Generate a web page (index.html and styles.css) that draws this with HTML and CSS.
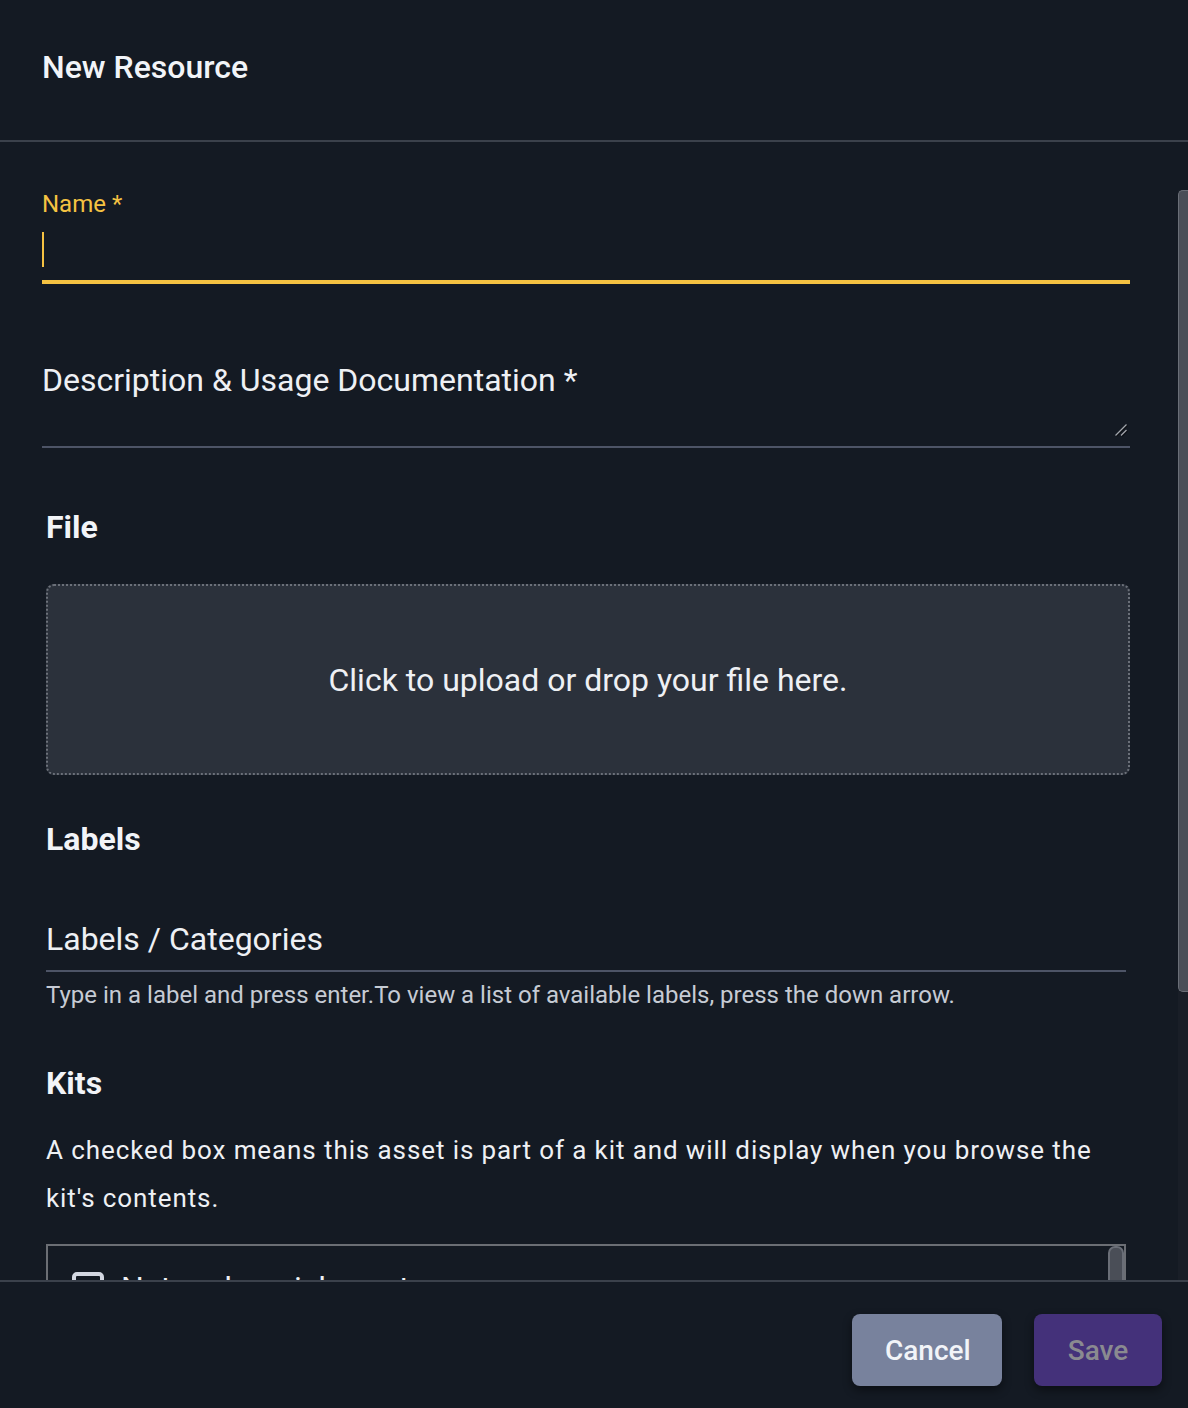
FILE: index.html
```html
<!DOCTYPE html>
<html lang="en">
<head>
<meta charset="utf-8">
<title>New Resource</title>
<link rel="stylesheet" href="styles.css">
</head>
<body>
<div class="dialog">
  <header class="dialog-header">
    <h1 class="dialog-title">New Resource</h1>
  </header>
  <div class="dialog-body">
    <form class="form">
      <div class="field-name">
        <label class="name-label">Name *</label>
        <div class="name-input"><span class="caret"></span></div>
      </div>
      <div class="field-desc">
        <label class="desc-label">Description &amp; Usage Documentation *</label>
        <div class="desc-input">
          <svg class="resize-handle" width="14" height="14" viewBox="0 0 14 14">
            <path d="M13 2 L2 13" stroke="#0b0e13" stroke-width="2.4"/>
            <path d="M13 7.5 L7.5 13" stroke="#0b0e13" stroke-width="2.4"/>
            <path d="M12.5 1.5 L1.5 12.5" stroke="#a3a7ae" stroke-width="1.3"/>
            <path d="M12.5 7 L7 12.5" stroke="#a3a7ae" stroke-width="1.3"/>
          </svg>
        </div>
      </div>

      <section class="section">
        <h2 class="section-title title-file">File</h2>
        <div class="dropzone">Click to upload or drop your file here.</div>
      </section>

      <section class="section">
        <h2 class="section-title title-labels">Labels</h2>
        <div class="labels-field">
          <span class="labels-label">Labels / Categories</span>
        </div>
        <p class="helper">Type in a label and press enter.To view a list of available labels, press the down arrow.</p>
      </section>

      <section class="section">
        <h2 class="section-title title-kits">Kits</h2>
        <p class="kits-text">A checked box means this asset is part of a kit and will display when you browse the kit's contents.</p>
        <div class="kits-box">
          <div class="kit-row">
            <span class="checkbox"></span>
            <span class="kit-name">Network enrichment</span>
          </div>
          <div class="kit-row">
            <span class="checkbox"></span>
            <span class="kit-name">Threat intelligence</span>
          </div>
          <div class="kits-thumb"></div>
        </div>
      </section>
    </form>
    <div class="scrollbar"><div class="scroll-thumb"></div></div>
  </div>
  <footer class="dialog-footer">
    <button class="btn btn-cancel" type="button">Cancel</button>
    <button class="btn btn-save" type="button" disabled>Save</button>
  </footer>
</div>
</body>
</html>
```

FILE: styles.css
```css
* { box-sizing: border-box; }

html, body {
  margin: 0;
  padding: 0;
  background: #141a23;
}

body {
  font-family: Roboto, "Liberation Sans", sans-serif;
  color: #eef0f4;
}

.dialog {
  width: 1188px;
  height: 1408px;
  display: flex;
  flex-direction: column;
  background: #141a23;
  overflow: hidden;
}

.dialog-header {
  height: 142px;
  flex: none;
  padding: 48px 0 0 42px;
  border-bottom: 2px solid #3b414b;
}

.dialog-title {
  margin: 0;
  font-size: 32px;
  line-height: 38px;
  font-weight: 500;
  color: #f2f4f8;
}

.dialog-body {
  position: relative;
  height: 1138px;
  flex: none;
  overflow: hidden;
}

.form {
  padding: 50px 58px 0 42px;
  margin: 0;
}

/* Name field */
.name-label {
  display: block;
  font-size: 24px;
  line-height: 24px;
  color: #f5c242;
}

.name-input {
  height: 68px;
  padding-top: 16px;
  border-bottom: 4px solid #f5c242;
}

.caret {
  display: block;
  width: 2px;
  height: 35px;
  background: #f5c242;
}

/* Description */
.field-desc {
  margin-top: 80px;
}

.desc-label {
  display: block;
  font-size: 32px;
  line-height: 32px;
  color: #eef0f4;
}

.desc-input {
  position: relative;
  height: 52px;
  border-bottom: 2px solid #4d5466;
}

.resize-handle {
  position: absolute;
  right: 2px;
  bottom: 9px;
}

/* Sections */
.section {
  margin-left: 4px;
}

.section-title {
  margin: 0;
  font-size: 32px;
  line-height: 32px;
  font-weight: 700;
  color: #f2f4f8;
}

.title-file { margin-top: 63px; }
.title-labels { margin-top: 48px; }
.title-kits { margin-top: 60px; }

.dropzone {
  margin-top: 41px;
  height: 191px;
  background: #2b313b;
  border: 2px dotted #6b7079;
  border-radius: 8px;
  display: flex;
  align-items: center;
  justify-content: center;
  font-size: 32px;
  color: #eef0f4;
}

.labels-field {
  margin-top: 68px;
  margin-right: 4px;
  height: 49px;
  border-bottom: 2px solid #4d5466;
}

.labels-label {
  display: block;
  font-size: 32px;
  line-height: 32px;
  color: #eef0f4;
}

.helper {
  margin: 11px 0 0;
  font-size: 24px;
  line-height: 24px;
  color: #c6cbd4;
}

.kits-text {
  margin: 27px 4px 0 0;
  font-size: 26px;
  line-height: 48px;
  letter-spacing: 0.9px;
  color: #eef0f4;
}

.kits-box {
  position: relative;
  margin-top: 22px;
  margin-right: 4px;
  height: 220px;
  border: 2px solid #6b6e74;
  padding: 26px 0 0 24px;
}

.kit-row {
  display: flex;
  align-items: center;
  gap: 17px;
  height: 32px;
  margin-bottom: 24px;
}

.checkbox {
  width: 32px;
  height: 32px;
  border: 4px solid #d3d7e1;
  border-radius: 5px;
  flex: none;
}

.kit-name {
  font-size: 32px;
  line-height: 32px;
  color: #eef0f4;
}

.kits-thumb {
  position: absolute;
  top: 0;
  right: 0;
  width: 16px;
  height: 120px;
  background: #4a4e57;
  border: 2px solid #6a6e77;
  border-radius: 7px 7px 0 0;
}

/* Overlay scrollbar */
.scrollbar {
  position: absolute;
  top: 48px;
  right: 0;
  bottom: 0;
  width: 10px;
  background: #191e27;
}

.scroll-thumb {
  height: 802px;
  background: #4a4e57;
  border: 1px solid #6a6e77;
  border-right: none;
  border-radius: 5px 0 0 5px;
}

/* Footer */
.dialog-footer {
  flex: 1;
  border-top: 2px solid #3b414b;
  display: flex;
  justify-content: flex-end;
  align-items: flex-start;
  gap: 32px;
  padding: 32px 26px 0 0;
  background: #141a23;
}

.btn {
  height: 72px;
  padding: 0 33px;
  border: none;
  border-radius: 8px;
  font-family: Roboto, "Liberation Sans", sans-serif;
  font-size: 28px;
  font-weight: 500;
  box-shadow: 0 4px 10px rgba(0, 0, 0, 0.45);
}

.btn-cancel {
  width: 150px;
  background: #78829d;
  color: #f2f4f8;
}

.btn-save {
  width: 128px;
  background: #44317a;
  color: #8a8a90;
}
```
